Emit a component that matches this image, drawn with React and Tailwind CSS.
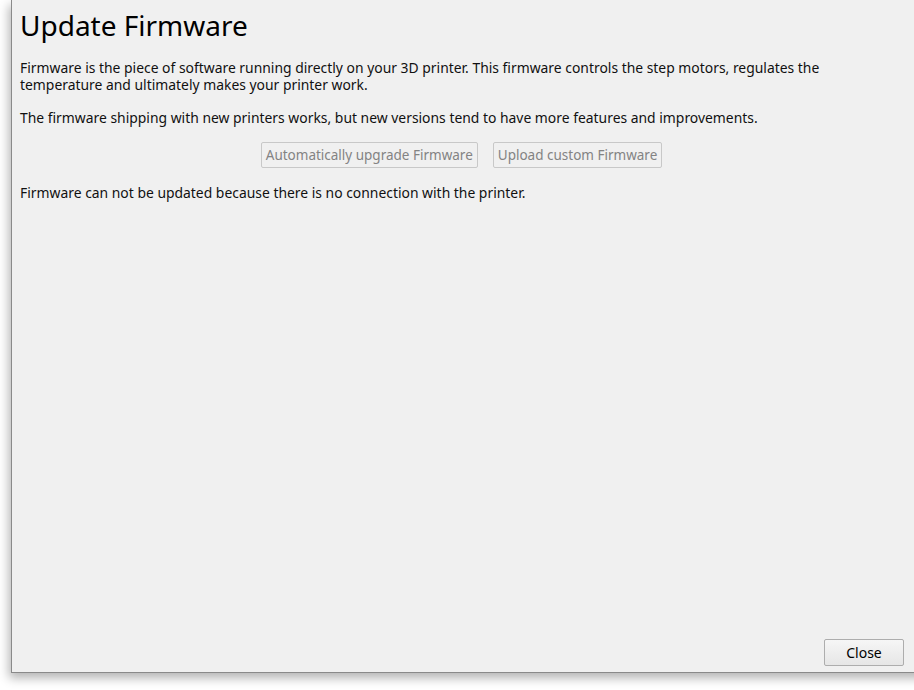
export default function App() {
  return (
    <div
      className="h-[690px] w-[914px] overflow-hidden bg-white"
      style={{ fontFamily: '"Noto Sans", "Open Sans", sans-serif' }}
    >
      <div className="ml-[11px] flex h-[673px] w-[920px] flex-col border-l border-b border-[#8a8a8a] bg-[#f0f0f0] pl-[8px] pr-[25px] shadow-[-2px_5px_10px_rgba(0,0,0,0.3)]">
        <h1 className="mt-[7px] text-[28px] leading-[36px] text-black">Update Firmware</h1>
        <p className="mt-[16px] max-w-[860px] text-[13.9px] leading-[17px] text-[#111]">
          Firmware is the piece of software running directly on your 3D printer. This firmware controls the step motors, regulates the temperature and ultimately makes your printer work.
        </p>
        <p className="mt-[16px] text-[13.9px] leading-[17px] text-[#111]">
          The firmware shipping with new printers works, but new versions tend to have more features and improvements.
        </p>
        <div className="mt-[16px] flex justify-center gap-[15px] pr-[3px]">
          <button className="h-[26px] rounded-[2px] border border-[#c8c8c8] bg-[#f0f0f0] px-[4px] text-[13.5px] text-[#838383]">
            Automatically upgrade Firmware
          </button>
          <button className="h-[26px] rounded-[2px] border border-[#c8c8c8] bg-[#f0f0f0] px-[4px] text-[13.5px] text-[#838383]">
            Upload custom Firmware
          </button>
        </div>
        <p className="mt-[16px] text-[13.9px] leading-[17px] text-[#111]">
          Firmware can not be updated because there is no connection with the printer.
        </p>
        <div className="mt-auto mb-[6px] flex pl-[804px]">
          <button className="h-[27px] w-[80px] rounded-[2px] border border-[#adadad] bg-gradient-to-b from-[#f6f6f6] to-[#e6e6e6] text-[14px] text-black">
            Close
          </button>
        </div>
      </div>
    </div>
  );
}
